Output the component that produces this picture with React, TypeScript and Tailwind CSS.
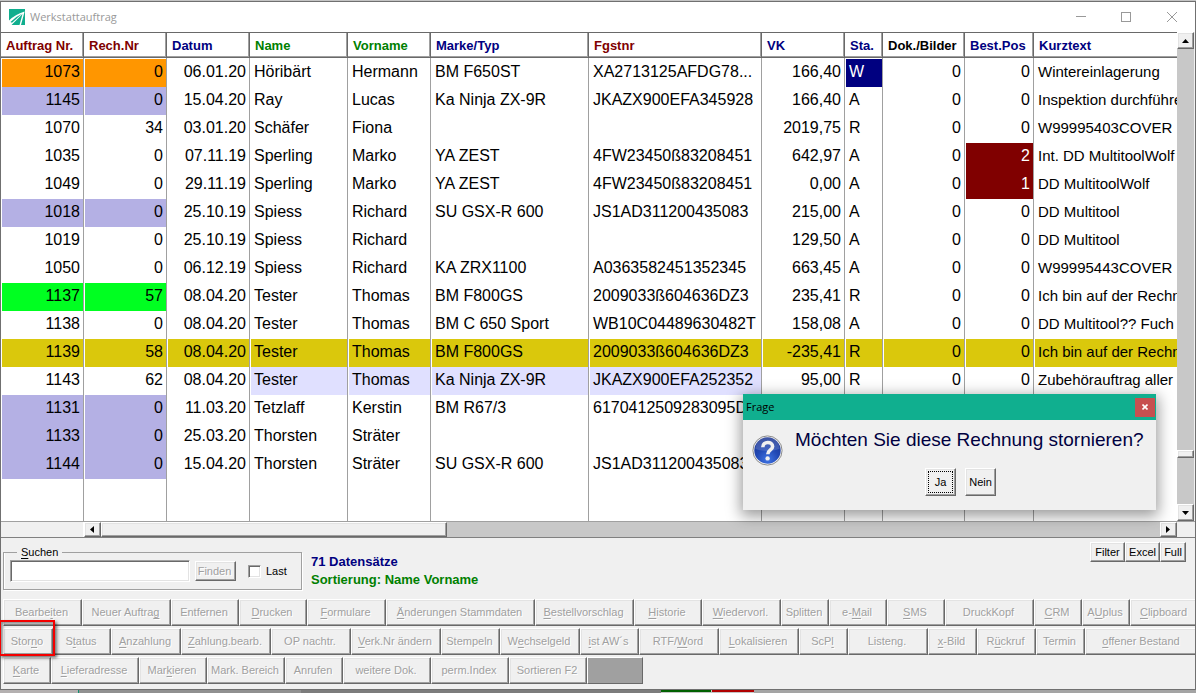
import React from "react";

const NAVY = "text-[#000080]";
const MAROON = "text-[#800000]";
const GREEN = "text-[#008000]";

const columns: { title: string; color: string; width: string; right?: boolean }[] = [
  { title: "Auftrag Nr.", color: MAROON, width: "w-[83px]", right: true },
  { title: "Rech.Nr", color: MAROON, width: "w-[83px]", right: true },
  { title: "Datum", color: NAVY, width: "w-[83px]", right: true },
  { title: "Name", color: GREEN, width: "w-[98px]" },
  { title: "Vorname", color: GREEN, width: "w-[83px]" },
  { title: "Marke/Typ", color: NAVY, width: "w-[158px]" },
  { title: "Fgstnr", color: MAROON, width: "w-[173px]" },
  { title: "VK", color: NAVY, width: "w-[83px]", right: true },
  { title: "Sta.", color: NAVY, width: "w-[38px]" },
  { title: "Dok./Bilder", color: "text-black", width: "w-[82px]", right: true },
  { title: "Best.Pos", color: NAVY, width: "w-[69px]", right: true },
  { title: "Kurztext", color: NAVY, width: "w-auto" },
];

const ORANGE = "bg-[#ff9600]";
const LILAC = "bg-[#b4b0e4]";
const LIME = "bg-[#00ff21]";
const GOLD = "bg-[#dac80c]";
const PALE = "bg-[#e0e0ff]";
const BLUE = "bg-[#000080] text-white";
const RED = "bg-[#800000] text-white";

const rows: { cells: string[]; marks: Record<number, string> }[] = [
  { cells: ["1073", "0", "06.01.20", "Höribärt", "Hermann", "BM F650ST", "XA2713125AFDG78...", "166,40", "W", "0", "0", "Wintereinlagerung"], marks: { 0: ORANGE, 1: ORANGE, 8: BLUE } },
  { cells: ["1145", "0", "15.04.20", "Ray", "Lucas", "Ka Ninja ZX-9R", "JKAZX900EFA345928", "166,40", "A", "0", "0", "Inspektion durchführe"], marks: { 0: LILAC, 1: LILAC } },
  { cells: ["1070", "34", "03.01.20", "Schäfer", "Fiona", "", "", "2019,75", "R", "0", "0", "W99995403COVER"], marks: {} },
  { cells: ["1035", "0", "07.11.19", "Sperling", "Marko", "YA ZEST", "4FW23450ß83208451", "642,97", "A", "0", "2", "Int. DD MultitoolWolf"], marks: { 10: RED } },
  { cells: ["1049", "0", "29.11.19", "Sperling", "Marko", "YA ZEST", "4FW23450ß83208451", "0,00", "A", "0", "1", "DD MultitoolWolf"], marks: { 10: RED } },
  { cells: ["1018", "0", "25.10.19", "Spiess", "Richard", "SU GSX-R 600", "JS1AD311200435083", "215,00", "A", "0", "0", "DD Multitool"], marks: { 0: LILAC, 1: LILAC } },
  { cells: ["1019", "0", "25.10.19", "Spiess", "Richard", "", "", "129,50", "A", "0", "0", "DD Multitool"], marks: {} },
  { cells: ["1050", "0", "06.12.19", "Spiess", "Richard", "KA ZRX1100", "A0363582451352345", "663,45", "A", "0", "0", "W99995443COVER"], marks: {} },
  { cells: ["1137", "57", "08.04.20", "Tester", "Thomas", "BM F800GS", "2009033ß604636DZ3", "235,41", "R", "0", "0", "Ich bin auf der Rechn"], marks: { 0: LIME, 1: LIME } },
  { cells: ["1138", "0", "08.04.20", "Tester", "Thomas", "BM C 650 Sport", "WB10C04489630482T", "158,08", "A", "0", "0", "DD Multitool?? Fuch"], marks: {} },
  { cells: ["1139", "58", "08.04.20", "Tester", "Thomas", "BM F800GS", "2009033ß604636DZ3", "-235,41", "R", "0", "0", "Ich bin auf der Rechn"], marks: { 0: GOLD, 1: GOLD, 2: GOLD, 3: GOLD, 4: GOLD, 5: GOLD, 6: GOLD, 7: GOLD, 8: GOLD, 9: GOLD, 10: GOLD, 11: GOLD } },
  { cells: ["1143", "62", "08.04.20", "Tester", "Thomas", "Ka Ninja ZX-9R", "JKAZX900EFA252352", "95,00", "R", "0", "0", "Zubehörauftrag aller"], marks: { 3: PALE, 4: PALE, 5: PALE, 6: PALE } },
  { cells: ["1131", "0", "11.03.20", "Tetzlaff", "Kerstin", "BM R67/3", "6170412509283095D", "", "", "", "", ""], marks: { 0: LILAC, 1: LILAC } },
  { cells: ["1133", "0", "25.03.20", "Thorsten", "Sträter", "", "", "", "", "", "", ""], marks: { 0: LILAC, 1: LILAC } },
  { cells: ["1144", "0", "15.04.20", "Thorsten", "Sträter", "SU GSX-R 600", "JS1AD311200435083", "", "", "", "", ""], marks: { 0: LILAC, 1: LILAC } },
];

// An underscore marks the letter that is the keyboard shortcut.
const actionRows: { label: string; width: string }[][] = [
  [
    { label: "Bearbe_iten", width: "w-[79px]" },
    { label: "Neuer Auftra_g", width: "w-[89px]" },
    { label: "Entfernen", width: "w-[68px]" },
    { label: "_Drucken", width: "w-[68px]" },
    { label: "_Formulare", width: "w-[79px]" },
    { label: "_Änderungen Stammdaten", width: "w-[149px]" },
    { label: "_Bestellvorschlag", width: "w-[99px]" },
    { label: "_Historie", width: "w-[68px]" },
    { label: "_Wiedervorl.", width: "w-[79px]" },
    { label: "Splitten", width: "w-[48px]" },
    { label: "e-_Mail", width: "w-[58px]" },
    { label: "_SMS", width: "w-[58px]" },
    { label: "DruckKopf", width: "w-[89px]" },
    { label: "_CRM", width: "w-[48px]" },
    { label: "A_Uplus", width: "w-[48px]" },
    { label: "_Clipboard", width: "flex-1" },
  ],
  [
    { label: "Stor_no", width: "w-[50px]" },
    { label: "S_tatus", width: "w-[58px]" },
    { label: "_Anzahlung", width: "w-[70px]" },
    { label: "_Zahlung.bearb.", width: "w-[90px]" },
    { label: "OP nachtr.", width: "w-[80px]" },
    { label: "_Verk.Nr ändern", width: "w-[90px]" },
    { label: "Stempeln", width: "w-[59px]" },
    { label: "W_echselgeld", width: "w-[80px]" },
    { label: "_ist AW´s", width: "w-[59px]" },
    { label: "RTF/_Word", width: "w-[80px]" },
    { label: "_Lokalisieren", width: "w-[80px]" },
    { label: "ScP_l", width: "w-[49px]" },
    { label: "Listeng.", width: "w-[80px]" },
    { label: "_x-Bild", width: "w-[49px]" },
    { label: "R_ückruf", width: "w-[59px]" },
    { label: "Termin", width: "w-[49px]" },
    { label: "_offener Bestand", width: "flex-1" },
  ],
  [
    { label: "_Karte", width: "w-[48px]" },
    { label: "_Lieferadresse", width: "w-[88px]" },
    { label: "Mar_kieren", width: "w-[68px]" },
    { label: "Mark. Bereich", width: "w-[78px]" },
    { label: "Anrufen", width: "w-[58px]" },
    { label: "weitere Dok.", width: "w-[88px]" },
    { label: "perm.Index", width: "w-[78px]" },
    { label: "Sortieren F2", width: "w-[78px]" },
  ],
];

const BEVEL =
  "border border-t-white border-l-white border-r-[#696969] border-b-[#696969] bg-[#f0f0f0] shadow-[inset_-1px_-1px_0_#a0a0a0,inset_1px_1px_0_#e3e3e3]";
const DISABLED = "pr-[2px] text-[#a0a0a0] [text-shadow:1px_1px_0_#ffffff]";

function Caption({ label }: { label: string }) {
  const at = label.indexOf("_");
  if (at < 0) return <span>{label}</span>;
  return (
    <span>
      {label.slice(0, at)}
      <span className="underline underline-offset-2">{label[at + 1]}</span>
      {label.slice(at + 2)}
    </span>
  );
}

function BevelButton({ className, children, label, disabled }: { className: string; children: React.ReactNode; label?: string; disabled?: boolean }) {
  return (
    <button
      type="button"
      aria-label={label}
      disabled={disabled}
      className={`flex shrink-0 items-center justify-center whitespace-nowrap text-[11px] leading-none ${BEVEL} ${className}`}
    >
      {children}
    </button>
  );
}

function TitleBar() {
  return (
    <header className="flex h-[30px] items-center bg-white pl-2">
      <svg width="16" height="16" viewBox="0 0 16 16" aria-hidden="true">
        <rect width="16" height="16" fill="#10ae8e" />
        <path d="M15.500 2.500Q6 5.500 0 11.500V16H2.500L13.500 5L10.500 16H12L15.500 3Z" fill="#ffffff" />
        <path d="M13 4.800Q6 8 1.500 13L3 13.800Z" fill="#10ae8e" />
      </svg>
      <h1 className="ml-[5px] flex-1 font-['Open_Sans','Noto_Sans',sans-serif] text-[11px] text-[#999999]">Werkstattauftrag</h1>
      <div className="flex text-[#999999]">
        <button type="button" aria-label="Minimieren" className="flex h-7 w-[45px] items-center justify-center">
          <svg width="10" height="10" viewBox="0 0 10 10"><path d="M0 4.500H10" stroke="currentColor" /></svg>
        </button>
        <button type="button" aria-label="Maximieren" className="flex h-7 w-[46px] items-center justify-center">
          <svg width="10" height="10" viewBox="0 0 10 10"><rect x="0.500" y="0.500" width="9" height="9" fill="none" stroke="currentColor" /></svg>
        </button>
        <button type="button" aria-label="Schließen" className="flex h-7 w-[46px] items-center justify-center">
          <svg width="10" height="10" viewBox="0 0 10 10"><path d="M0 0L10 10M10 0L0 10" stroke="currentColor" /></svg>
        </button>
      </div>
    </header>
  );
}

function OrderTable() {
  return (
    <div className="min-w-0 flex-1 overflow-hidden bg-white">
      <table className="w-full table-fixed border-separate border-spacing-0 leading-[26px] text-black">
        <colgroup>
          {columns.map((c) => (
            <col key={c.title} className={c.width} />
          ))}
        </colgroup>
        <thead>
          <tr>
            {columns.map((c, i) => (
              <th
                key={c.title}
                scope="col"
                className={`h-[26px] border-y border-y-[#696969] pt-[2px] pl-[5px] text-left text-[13px] leading-[22px] font-bold whitespace-nowrap ${
                  i < 11 ? "border-r border-r-[#696969] shadow-[inset_-1px_-1px_0_#a0a0a0]" : "shadow-[inset_0_-1px_0_#a0a0a0]"
                } ${c.color}`}
              >
                {c.title}
              </th>
            ))}
          </tr>
        </thead>
        <tbody>
          <tr aria-hidden="true">
            {columns.map((c, i) => (
              <td key={c.title} className={`h-px p-0 ${i < 11 ? "border-r border-[#a0a0a0]" : ""}`} />
            ))}
          </tr>
          {rows.map((row) => (
            <tr key={row.cells[0]}>
              {row.cells.map((cell, i) => (
                <td
                  key={columns[i].title}
                  className={`h-7 overflow-hidden border-l border-l-white p-0 pb-[2px] whitespace-nowrap ${
                    i < 11 ? "border-r border-r-[#a0a0a0] text-[16px]" : "text-[15px]"
                  } ${columns[i].right ? "pr-[3px] text-right" : "pl-[3px]"} ${row.marks[i] ?? ""}`}
                >
                  {cell}
                </td>
              ))}
            </tr>
          ))}
          <tr aria-hidden="true">
            {columns.map((c, i) => (
              <td key={c.title} className={`h-[42px] p-0 ${i < 11 ? "border-r border-[#a0a0a0]" : ""}`} />
            ))}
          </tr>
        </tbody>
      </table>
    </div>
  );
}

function VerticalScrollbar() {
  return (
    <div className="flex w-[17px] shrink-0 flex-col bg-[#c8c8c8]">
      <BevelButton className="h-[17px]" label="Nach oben">
        <svg width="7" height="4" viewBox="0 0 7 4"><path d="M0 4L3.500 0L7 4Z" /></svg>
      </BevelButton>
      <div className="grow-[402]" />
      <div className={`h-2 ${BEVEL}`} />
      <div className="grow-[46]" />
      <BevelButton className="h-[17px]" label="Nach unten">
        <svg width="7" height="4" viewBox="0 0 7 4"><path d="M0 0H7L3.500 4Z" /></svg>
      </BevelButton>
    </div>
  );
}

function HorizontalScrollbar() {
  return (
    <div className="flex h-[17px] border-t border-b border-t-[#a0a0a0] border-b-[#808080] bg-[#f0f0f0]">
      <div className="w-[83px] shrink-0 border-r border-white" />
      <div className="flex flex-1 bg-[#c8c8c8]">
        <BevelButton className="w-[17px] pr-[2px]" label="Nach links">
          <svg width="4" height="7" viewBox="0 0 4 7"><path d="M4 0V7L0 3.500Z" /></svg>
        </BevelButton>
        <div className={`grow-[344] ${BEVEL}`} />
        <div className="grow-[713]" />
        <BevelButton className="w-[17px] pr-[2px]" label="Nach rechts">
          <svg width="4" height="7" viewBox="0 0 4 7"><path d="M0 0V7L4 3.500Z" /></svg>
        </BevelButton>
      </div>
      <div className="w-[18px] shrink-0" />
    </div>
  );
}

function SearchArea() {
  return (
    <section className="flex h-[61px] items-start pt-[6px] pr-[9px] pl-[2px]">
      <fieldset className="h-[46px] w-[299px] shrink-0 border border-[#a0a0a0] px-[6px] shadow-[inset_1px_0_0_#ffffff,1px_1px_0_#ffffff]">
        <legend className="ml-[7px] px-1 text-[11px] leading-[16px]">
          <label htmlFor="suche"><Caption label="_Suchen" /></label>
        </legend>
        <div className="flex h-[22px] items-center">
          <input
            id="suche"
            type="text"
            className="h-[22px] w-[180px] border border-t-[#a0a0a0] border-r-white border-b-white border-l-[#a0a0a0] bg-white px-1 text-[13px] shadow-[inset_1px_1px_0_#696969,inset_-1px_-1px_0_#e3e3e3] outline-none"
          />
          <BevelButton disabled className={`ml-[5px] h-5 w-[41px] ${DISABLED}`}>Finden</BevelButton>
          <label className="ml-[12px] flex items-center gap-[5px] text-[11px]">
            <input
              type="checkbox"
              className="h-[13px] w-[13px] appearance-none border border-t-[#a0a0a0] border-r-white border-b-white border-l-[#a0a0a0] bg-white shadow-[inset_1px_1px_0_#696969,inset_-1px_-1px_0_#e3e3e3]"
            />
            Last
          </label>
        </div>
      </fieldset>
      <div className="ml-[9px] flex-1 pt-[9px] text-[13px] leading-[18px] font-bold">
        <p className="text-[#000080]">71 Datensätze</p>
        <p className="text-[#008000]">Sortierung: Name Vorname</p>
      </div>
      <div className="-mt-[2px] flex">
        <BevelButton className="h-5 w-[35px]">Filter</BevelButton>
        <BevelButton className="h-5 w-[35px]">Excel</BevelButton>
        <BevelButton className="h-5 w-[26px]">Full</BevelButton>
      </div>
    </section>
  );
}

function ActionButtons() {
  return (
    <section className="relative">
      <div className="space-y-[2px] overflow-hidden pl-[2px]">
        {actionRows.map((row, r) => (
          <div key={row[0].label} className="-mr-1 flex h-[27px]">
            {row.map((b) => (
              <BevelButton key={b.label} disabled className={`${b.width} ${DISABLED}`}>
                <Caption label={b.label} />
              </BevelButton>
            ))}
            {r === 2 && <div className="w-14 border border-t-white border-r-[#696969] border-b-[#696969] border-l-white bg-[#a0a0a0]" />}
          </div>
        ))}
      </div>
      <div className="pointer-events-none absolute top-[21px] -left-[2px] h-9 w-14 border-2 border-[#f40000] shadow-[2px_2px_3px_rgba(0,0,0,0.5),inset_2px_2px_3px_rgba(0,0,0,0.4)]" />
    </section>
  );
}

function QuestionIcon() {
  return (
    <svg width="31" height="31" viewBox="0 0 31 31" aria-hidden="true" className="shrink-0">
      <defs>
        <radialGradient id="ball" cx="0.500" cy="0.850" r="0.850">
          <stop offset="0" stopColor="#3f74e4" />
          <stop offset="0.500" stopColor="#2148b4" />
          <stop offset="1" stopColor="#1c3590" />
        </radialGradient>
      </defs>
      <circle cx="15.500" cy="15.500" r="14.600" fill="#f4f4f4" stroke="#8c8c8c" />
      <circle cx="15.500" cy="15.500" r="13.200" fill="url(#ball)" />
      <path d="M3.500 14A12 12 0 0 1 27.500 14Q16 18 3.500 14Z" fill="#ffffff" opacity="0.150" />
      <path d="M10.800 12.200C10.800 6 20.600 6 20.600 11.400C20.600 15 15.800 14.800 15.800 19.200" fill="none" stroke="#f0f0f0" strokeWidth="3.600" />
      <circle cx="15.600" cy="23.400" r="2.200" fill="#f0f0f0" />
    </svg>
  );
}

function QuestionDialog() {
  return (
    <div
      role="dialog"
      aria-labelledby="frage"
      className="absolute top-[392px] right-[39px] w-[413px] bg-[#f0f0f0] shadow-[0_4px_14px_2px_rgba(0,0,0,0.4)]"
    >
      <div className="flex h-[26px] items-center justify-between bg-[#10af8f] pr-px pl-[3px]">
        <h2 id="frage" className="font-['Open_Sans','Noto_Sans',sans-serif] text-[11px] text-black">Frage</h2>
        <button type="button" aria-label="Schließen" className="flex h-[19px] w-5 items-center justify-center bg-[#c75050] text-white">
          <svg width="6" height="6" viewBox="0 0 6 6"><path d="M0.500 0.500L5.500 5.500M5.500 0.500L0.500 5.500" stroke="currentColor" strokeWidth="1.600" /></svg>
        </button>
      </div>
      <div className="flex pt-2 pl-[9px]">
        <div className="pt-[7px]"><QuestionIcon /></div>
        <p className="ml-3 text-[19px] leading-6 whitespace-nowrap text-[#000040]">Möchten Sie diese Rechnung stornieren?</p>
      </div>
      <div className="flex gap-[9px] pt-[2px] pb-[14px] pl-[182px]">
        <BevelButton className="relative h-7 w-[31px]">
          Ja
          <span className="absolute inset-[2px] border border-dotted border-black" />
        </BevelButton>
        <BevelButton className="h-7 w-[31px]">Nein</BevelButton>
      </div>
    </div>
  );
}

export default function App() {
  return (
    <div className="flex min-h-screen flex-col overflow-hidden bg-[#c4c4c4] pt-px font-['Liberation_Sans',Arial,sans-serif] text-black">
      <main className="relative border border-[#707070] bg-[#f0f0f0]">
        <TitleBar />
        <div className="flex pr-px">
          <OrderTable />
          <VerticalScrollbar />
        </div>
        <HorizontalScrollbar />
        <SearchArea />
        <ActionButtons />
        <div className="h-[5px]" />
        <QuestionDialog />
      </main>
      <footer className="flex h-[3px]">
        <div className="w-[78px] bg-[#b4b0b0]" />
        <div className="w-px bg-[#109070]" />
        <div className="w-[222px] bg-[#909090]" />
        <div className="w-[360px] bg-[#7c7c7c]" />
        <div className="h-[2px] w-[50px] bg-[#006000]" />
        <div className="ml-px h-[2px] w-[42px] bg-[#b00000]" />
        <div className="flex-1 bg-[#a4a4a4]" />
      </footer>
    </div>
  );
}
